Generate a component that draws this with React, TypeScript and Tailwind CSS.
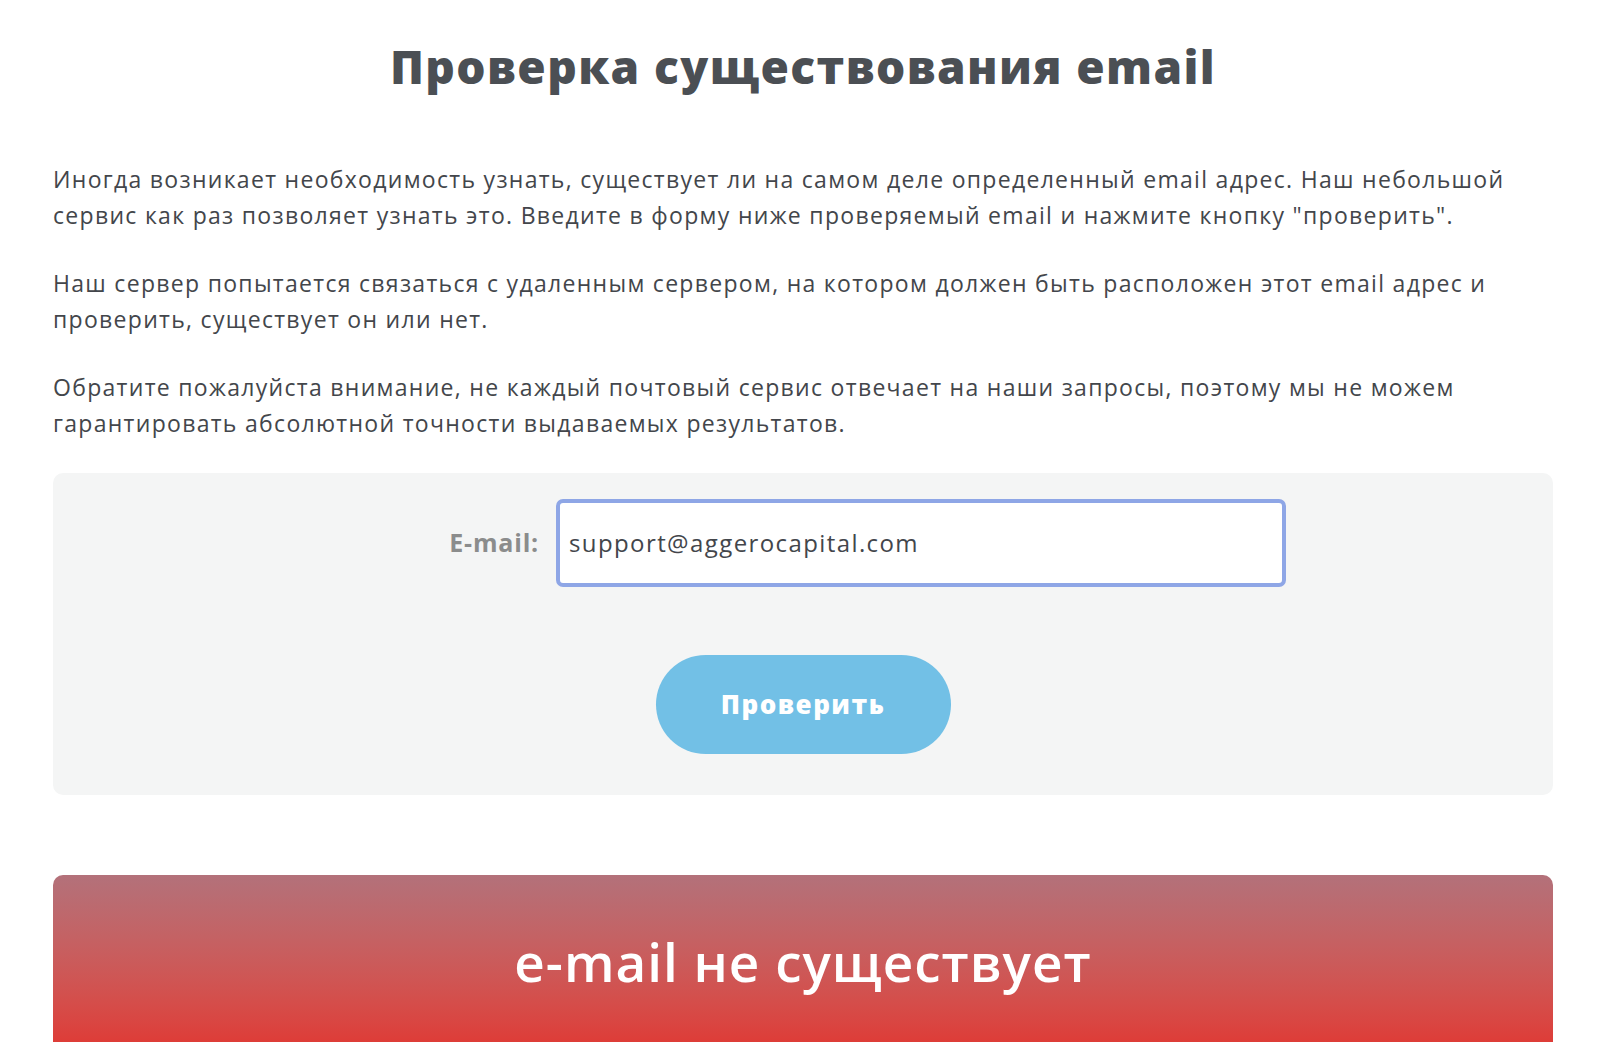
import React from "react";

export default function App() {
  const body = { fontFamily: '"Open Sans", "Noto Sans", sans-serif' };
  return (
    <div className="min-h-screen bg-white" style={body}>
      <div className="pl-[53px] pr-[47px] pb-10">
        <h1 className="pt-[38px] text-center text-[46px] leading-[56px] font-extrabold text-[#4b4f54] tracking-[1.4px]">
          Проверка существования email
        </h1>
        <div className="mt-[67px] text-[23px] leading-[36px] text-[#43464b] tracking-[1.3px]">
          <p>
            Иногда возникает необходимость узнать, существует ли на самом деле определенный email адрес. Наш небольшой
            сервис как раз позволяет узнать это. Введите в форму ниже проверяемый email и нажмите кнопку "проверить".
          </p>
          <p className="mt-[32px]">
            Наш сервер попытается связаться с удаленным сервером, на котором должен быть расположен этот email адрес и
            проверить, существует он или нет.
          </p>
          <p className="mt-[32px]">
            Обратите пожалуйста внимание, не каждый почтовый сервис отвечает на наши запросы, поэтому мы не можем
            гарантировать абсолютной точности выдаваемых результатов.
          </p>
        </div>

        <div className="mt-[32px] h-[322px] rounded-[10px] bg-[#f4f5f5] pt-[26px]">
          <div className="flex items-center">
            <label className="w-[486px] text-right text-[25px] font-bold text-[#8b8c8c] tracking-[0.8px]">
              E-mail:
            </label>
            <div className="ml-[17px] flex h-[88px] w-[730px] items-center rounded-[7px] border-[4px] border-[#8ea6e6] bg-white pl-[9px] text-[24px] text-[#43464b] tracking-[1.4px]">
              support@aggerocapital.com
            </div>
          </div>
          <div className="mt-[68px] flex justify-center">
            <button className="h-[99px] w-[295px] rounded-full bg-[#72c0e6] text-[26px] font-extrabold text-white tracking-[1.5px]">
              Проверить
            </button>
          </div>
        </div>

        <div className="mt-[80px] h-[190px] rounded-t-[10px] bg-gradient-to-b from-[#b3717a] to-[#e32f2b] pt-[56px] text-center">
          <div className="text-[53px] leading-[62px] font-semibold text-white tracking-[1px]">e-mail не существует</div>
        </div>
      </div>
    </div>
  );
}
